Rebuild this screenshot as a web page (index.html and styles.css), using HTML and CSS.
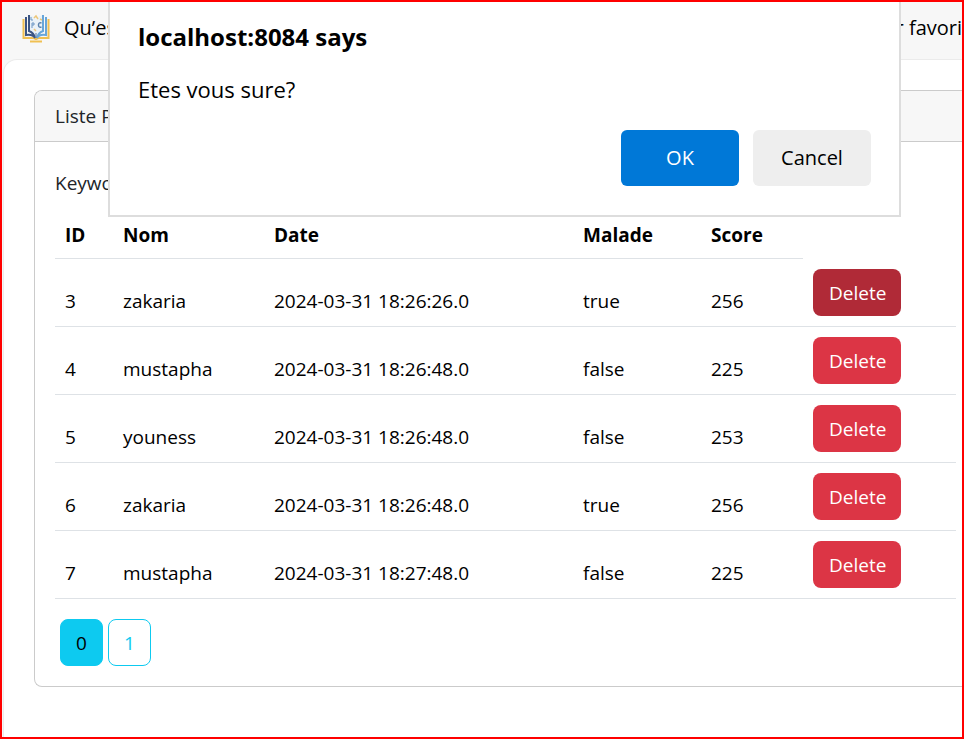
FILE: index.html
```html
<!DOCTYPE html>
<html lang="fr">
<head>
<meta charset="utf-8">
<title>Liste Patients</title>
<link rel="stylesheet" href="styles.css">
</head>
<body>
<header class="bookmarks">
  <svg class="bookmark-icon" viewBox="0 0 28 30" aria-hidden="true">
    <path d="M1.5 6V25H10Q14 25 14 27Q14 25 18 25H26.500V6" fill="none" stroke="#f0c052" stroke-width="2"/>
    <path d="M8 28.500H20" stroke="#f0c052" stroke-width="2"/>
    <path d="M7 2Q12 3 14 7Q16 3 21 2V18Q16 18 14 23Q12 18 7 18Z" fill="#e9f2f8"/>
    <path d="M4 4V22Q11 21 13 25Q12 20 7 18V2" fill="none" stroke="#3b5583" stroke-width="2"/>
    <path d="M24 4V22Q17 21 15 25Q16 20 21 18V2" fill="none" stroke="#68a6d9" stroke-width="2"/>
    <path d="M14 20V25" stroke="#54749c" stroke-width="1"/>
    <path d="M9 4V7H11M10 15V10H12V12H10" fill="none" stroke="#6d97c4" stroke-width="1"/>
    <path d="M19.500 10Q16.500 9 16.500 12Q16.500 15 19.500 14" fill="none" stroke="#5b82ac" stroke-width="1.5"/>
    <path d="M12 5L14 3L16 6M18 6L20 7M12 16L14 18" fill="none" stroke="#ecc679" stroke-width="1.5"/>
  </svg>
  <a class="bookmark" href="#">Qu’est</a>
  <a class="bookmark bookmark-last" href="#">Importer favori</a>
</header>
<main class="page">
  <section class="card">
    <h1 class="card-header">Liste Patients</h1>
    <div class="card-body">
      <p class="keyword">Keyword</p>
      <table class="patients">
        <colgroup>
          <col class="col-id"><col class="col-name"><col class="col-date"><col class="col-sick"><col class="col-score"><col class="col-action">
        </colgroup>
        <thead>
          <tr><th>ID</th><th>Nom</th><th>Date</th><th>Malade</th><th>Score</th></tr>
        </thead>
        <tbody>
          <tr><td>3</td><td>zakaria</td><td>2024-03-31 18:26:26.0</td><td>true</td><td>256</td><td><button class="btn btn-danger active" type="button">Delete</button></td></tr>
          <tr><td>4</td><td>mustapha</td><td>2024-03-31 18:26:48.0</td><td>false</td><td>225</td><td><button class="btn btn-danger" type="button">Delete</button></td></tr>
          <tr><td>5</td><td>youness</td><td>2024-03-31 18:26:48.0</td><td>false</td><td>253</td><td><button class="btn btn-danger" type="button">Delete</button></td></tr>
          <tr><td>6</td><td>zakaria</td><td>2024-03-31 18:26:48.0</td><td>true</td><td>256</td><td><button class="btn btn-danger" type="button">Delete</button></td></tr>
          <tr><td>7</td><td>mustapha</td><td>2024-03-31 18:27:48.0</td><td>false</td><td>225</td><td><button class="btn btn-danger" type="button">Delete</button></td></tr>
        </tbody>
      </table>
      <nav class="pages" aria-label="Pages">
        <a class="btn btn-page current" href="#">0</a>
        <a class="btn btn-page" href="#">1</a>
      </nav>
    </div>
  </section>
</main>
<dialog class="confirm" open aria-labelledby="confirm-title">
  <h2 class="confirm-title" id="confirm-title">localhost:8084 says</h2>
  <p class="confirm-text">Etes vous sure?</p>
  <div class="confirm-actions">
    <button class="confirm-btn primary" type="button">OK</button>
    <button class="confirm-btn" type="button">Cancel</button>
  </div>
</dialog>
</body>
</html>
```
FILE: styles.css
```css
* {
  box-sizing: border-box;
}

body {
  margin: 0;
  min-height: 100vh;
  display: flex;
  flex-direction: column;
  border: 2px solid #f00;
  background: #f7f7f7;
  color: #000;
  font: 19px/30px "Open Sans", sans-serif;
  overflow: hidden;
  position: relative;
}

h1, h2, p {
  margin: 0;
}

button {
  font: inherit;
}

.bookmarks {
  display: flex;
  align-items: center;
  height: 57px;
  padding: 0 0 6px 20px;
}

.bookmark-icon {
  width: 28px;
  height: 30px;
  margin-right: 14px;
}

.bookmark {
  color: #000;
  font-size: 20px;
  text-decoration: none;
  white-space: nowrap;
}

.bookmark-last {
  margin-left: auto;
}

.page {
  flex: 1;
  margin-left: 1px;
  padding: 30px 0 40px 30px;
  border: 1px solid #ebebeb;
  border-width: 1px 0 0 1px;
  border-top-left-radius: 14px;
  background: #fff;
}

.card {
  border: 1px solid #cbcbcb;
  border-right: 0;
  border-radius: 8px 0 0 8px;
  overflow: hidden;
}

.card-header {
  padding: 10px 20px;
  border-bottom: 1px solid #cbcbcb;
  background: #f7f7f7;
  color: #212529;
  font-size: 19px;
  font-weight: 400;
}

.card-body {
  padding: 26px 6px 20px 20px;
}

.keyword {
  margin-bottom: 12px;
  color: #212529;
}

.patients {
  width: 100%;
  table-layout: fixed;
  border-collapse: collapse;
}

.col-id { width: 58px; }
.col-name { width: 151px; }
.col-date { width: 309px; }
.col-sick { width: 128px; }
.col-score { width: 102px; }

.patients th,
.patients td {
  padding: 10px;
  border-bottom: 1px solid #dee2e6;
  text-align: left;
  vertical-align: bottom;
}

.patients th {
  padding-bottom: 8px;
}

.btn {
  display: block;
  padding: 9px 15px 7px;
  border: 1px solid transparent;
  border-radius: 8px;
  line-height: 29px;
  text-align: center;
  text-decoration: none;
}

.btn-danger {
  width: 88px;
  background: #dc3545;
  color: #fff;
}

.btn-danger.active {
  background: #b02a37;
}

.pages {
  display: flex;
  gap: 5px;
  padding: 20px 5px 0;
}

.btn-page {
  width: 43px;
  border-color: #0dcaf0;
  color: #0dcaf0;
}

.btn-page.current {
  background: #0dcaf0;
  color: #000;
}

.confirm {
  position: absolute;
  top: 0;
  left: 106px;
  right: 61px;
  width: auto;
  margin: 0;
  padding: 20px 28px 29px;
  border: 2px solid #ddd;
  border-top: 0;
  background: #fff;
  color: #000;
}

.confirm-title {
  font-size: 24px;
  line-height: 30px;
}

.confirm-text {
  margin-top: 22px;
  font-size: 22px;
}

.confirm-actions {
  display: flex;
  justify-content: flex-end;
  gap: 14px;
  margin-top: 26px;
}

.confirm-btn {
  width: 118px;
  height: 56px;
  border: 0;
  border-radius: 6px;
  background: #eee;
  color: #000;
  font-size: 20px;
}

.confirm-btn.primary {
  background: #0078d7;
  color: #fff;
}
```
